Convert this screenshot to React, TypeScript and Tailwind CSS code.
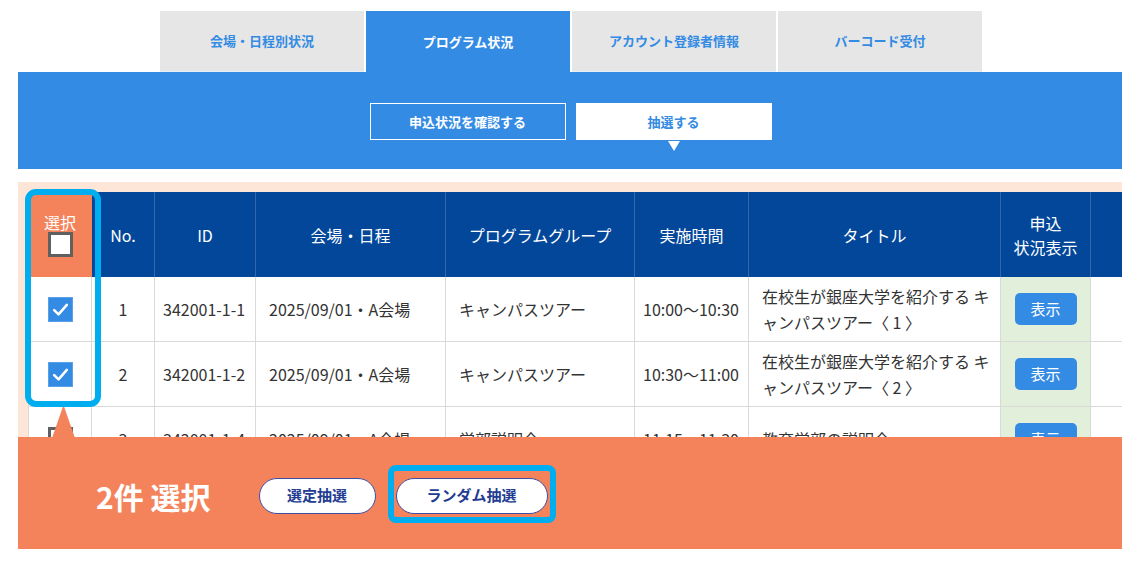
import React from "react"

const tabs = [
  { label: "会場・日程別状況", active: false },
  { label: "プログラム状況", active: true },
  { label: "アカウント登録者情報", active: false },
  { label: "バーコード受付", active: false },
]

const rows = [
  {
    checked: true,
    no: "1",
    id: "342001-1-1",
    place: "2025/09/01・A会場",
    group: "キャンパスツアー",
    time: "10:00〜10:30",
    title: ["在校生が銀座大学を紹介する キ", "ャンパスツアー〈 1 〉"],
  },
  {
    checked: true,
    no: "2",
    id: "342001-1-2",
    place: "2025/09/01・A会場",
    group: "キャンパスツアー",
    time: "10:30〜11:00",
    title: ["在校生が銀座大学を紹介する キ", "ャンパスツアー〈 2 〉"],
  },
  {
    checked: false,
    no: "3",
    id: "342001-1-4",
    place: "2025/09/01・A会場",
    group: "学部説明会",
    time: "11:15〜11:30",
    title: ["教育学部の説明会"],
  },
]

const gridCols =
  "grid grid-cols-[64px_63px_101px_190px_189px_114px_252px_90px_1fr]"

function CheckBox({ checked }: { checked: boolean }) {
  if (checked) {
    return (
      <div className="w-[25px] h-[25px] bg-[#338be4] border border-[#5a9fe8] flex items-center justify-center">
        <svg className="w-[23px] h-[23px]" viewBox="0 0 20 20" fill="none">
          <path
            d="M4.5 10.5l3.8 3.8L15.5 6"
            stroke="white"
            strokeWidth={2.2}
            strokeLinecap="round"
            strokeLinejoin="round"
          />
        </svg>
      </div>
    )
  }
  return <div className="w-[25px] h-[25px] bg-white border-[3px] border-[#606060]" />
}

export default function App() {
  return (
    <div className="relative w-[1139px] h-[572px] bg-white overflow-hidden font-['Noto_Sans_CJK_JP','Noto_Sans',sans-serif]">
      {/* Tabs */}
      <div className="flex justify-center gap-[2px] pt-[11px] pl-[3px]">
        {tabs.map((t) => (
          <div
            key={t.label}
            className={
              t.active
                ? "w-[204px] h-[61px] bg-[#338be4] text-white text-[13px] font-bold flex items-center justify-center"
                : "w-[204px] h-[61px] bg-[#e6e6e6] text-[#338be4] text-[13px] font-bold flex items-center justify-center border-b border-[#e8eef6]"
            }
          >
            {t.label}
          </div>
        ))}
      </div>

      {/* Blue band */}
      <div className="ml-[18px] w-[1104px] h-[97px] bg-[#338be4] flex justify-center gap-[10px] pt-[31px] pl-[1px]">
        <div className="w-[196px] h-[37px] border border-white text-white text-[13px] font-bold flex items-center justify-center">
          申込状況を確認する
        </div>
        <div className="relative w-[196px] h-[37px] bg-white text-[#338be4] text-[13px] font-bold flex items-center justify-center">
          抽選する
          <div className="absolute top-full mt-[1px] left-1/2 -translate-x-1/2 w-0 h-0 border-l-[6px] border-r-[6px] border-t-[10px] border-l-transparent border-r-transparent border-t-white" />
        </div>
      </div>

      {/* Table area */}
      <div className="ml-[18px] mt-[13px] w-[1104px] h-[255px] bg-[#fde5d8] pl-[10px] pt-[10px] overflow-hidden">
        <div className="bg-white">
          {/* Header */}
          <div className={`${gridCols} h-[85px] bg-[#02479a] text-white text-[16px]`}>
            <div className="bg-[#f4835b] flex flex-col items-center justify-center gap-[1px]">
              <span className="leading-[18px]">選択</span>
              <div className="w-[25px] h-[25px] bg-white border-[3px] border-[#606060]" />
            </div>
            <div className="border-r border-[#3566a8] flex items-center justify-center">No.</div>
            <div className="border-r border-[#3566a8] flex items-center justify-center">ID</div>
            <div className="border-r border-[#3566a8] flex items-center justify-center">会場・日程</div>
            <div className="border-r border-[#3566a8] flex items-center justify-center">プログラムグループ</div>
            <div className="border-r border-[#3566a8] flex items-center justify-center">実施時間</div>
            <div className="border-r border-[#3566a8] flex items-center justify-center">タイトル</div>
            <div className="border-r border-[#3566a8] flex flex-col items-center justify-center leading-[24px]">
              <span>申込</span>
              <span>状況表示</span>
            </div>
            <div />
          </div>

          {/* Rows */}
          {rows.map((r) => (
            <div
              key={r.no}
              className={`${gridCols} h-[65px] border-b border-[#d9d9d9] text-[16px] text-[#333333]`}
            >
              <div className="border-l border-r border-[#d9d9d9] flex items-center justify-center">
                <CheckBox checked={r.checked} />
              </div>
              <div className="border-r border-[#d9d9d9] flex items-center justify-center">{r.no}</div>
              <div className="border-r border-[#d9d9d9] flex items-center pl-[8px] whitespace-nowrap">{r.id}</div>
              <div className="border-r border-[#d9d9d9] flex items-center pl-[13px] whitespace-nowrap">{r.place}</div>
              <div className="border-r border-[#d9d9d9] flex items-center pl-[13px] whitespace-nowrap">{r.group}</div>
              <div className="border-r border-[#d9d9d9] flex items-center pl-[8px] whitespace-nowrap">{r.time}</div>
              <div className="border-r border-[#d9d9d9] flex flex-col justify-center pl-[13px] leading-[26px] whitespace-pre">
                {r.title.map((line) => (
                  <span key={line}>{line}</span>
                ))}
              </div>
              <div className="bg-[#e2efda] border-r border-[#d9d9d9] flex items-center justify-center">
                <div className="w-[62px] h-[32px] bg-[#338be4] rounded-[5px] text-white text-[15px] flex items-center justify-center">
                  表示
                </div>
              </div>
              <div />
            </div>
          ))}
        </div>
      </div>

      {/* Selection bar */}
      <div className="ml-[18px] w-[1104px] h-[112px] bg-[#f4835b] flex items-center pl-[78px] pt-[5px]">
        <span className="text-white text-[30px] font-bold leading-none">2件 選択</span>
        <div className="ml-[48px] w-[117px] h-[36px] bg-white rounded-full border-[1.5px] border-[#3b4fa6] text-[#233c91] text-[15px] font-bold flex items-center justify-center">
          選定抽選
        </div>
        <div className="ml-[20px] w-[152px] h-[36px] bg-white rounded-full border-[1.5px] border-[#3b4fa6] text-[#233c91] text-[15px] font-bold flex items-center justify-center">
          ランダム抽選
        </div>
      </div>

      {/* Annotations */}
      <svg className="absolute left-[51px] top-[405px]" width="25" height="36" viewBox="0 0 25 36">
        <polygon points="12.5,0 0,36 25,36" fill="#f4835b" />
      </svg>
      <div className="absolute left-[25px] top-[189px] w-[76px] h-[218px] border-[6px] border-[#00aeef] rounded-[11px]" />
      <div className="absolute left-[388px] top-[465px] w-[168px] h-[58px] border-[6px] border-[#00aeef] rounded-[8px]" />
    </div>
  )
}
